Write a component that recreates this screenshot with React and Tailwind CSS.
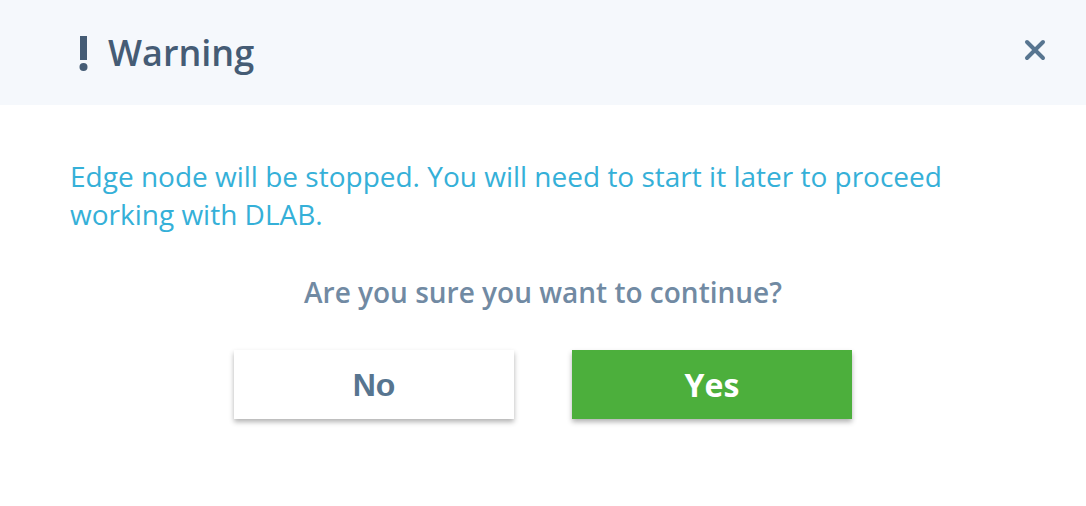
import { X } from 'lucide-react';

export default function App() {
  return (
    <div className="w-[1086px] h-[506px] bg-white font-['Open_Sans',sans-serif]">
      <div className="h-[105px] bg-[#f5f8fc] flex items-center justify-between pl-[78px] pr-[35px]">
        <div className="flex items-center gap-[20px]">
          <svg width="10" height="36" viewBox="0 0 10 36" className="mt-[2px]">
            <rect x="2" y="0" width="7" height="24" fill="#455c75" />
            <circle cx="5.5" cy="31" r="4" fill="#455c75" />
          </svg>
          <h1 className="text-[36px] font-semibold text-[#455c75] leading-none">Warning</h1>
        </div>
        <button className="text-[#577590] mb-[5px]">
          <X size={32} strokeWidth={3} />
        </button>
      </div>
      <div className="px-[70px] pt-[52px]">
        <p className="text-[28px] leading-[38px] text-[#35b0d8]">
          Edge node will be stopped. You will need to start it later to proceed
          <br />
          working with DLAB.
        </p>
        <p className="mt-[40px] text-center text-[28px] leading-[38px] font-semibold text-[#718aa3]">
          Are you sure you want to continue?
        </p>
        <div className="mt-[39px] flex justify-center gap-[58px]">
          <button className="w-[280px] h-[69px] bg-white text-[#577590] text-[32px] font-bold font-['Liberation_Sans',sans-serif] shadow-[0_3px_5px_rgba(0,0,0,0.3)]">
            No
          </button>
          <button className="w-[280px] h-[69px] bg-[#4caf3c] text-white text-[32px] font-bold shadow-[0_3px_5px_rgba(0,0,0,0.3)]">
            Yes
          </button>
        </div>
      </div>
    </div>
  );
}
